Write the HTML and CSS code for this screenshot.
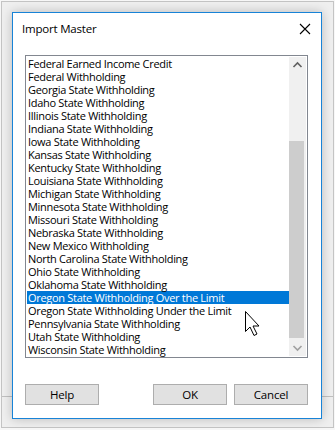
FILE: index.html
```html
<!DOCTYPE html>
<html>
<head>
	<title>Import Master</title>
	<meta charset=utf-8>
	<link rel="stylesheet" href="styles.css">
</head>
<body>
	<!-- the window behind the dialog -->
	<div class="backwin">
		<div class="dialog">
			<div class="titlebar">
				<span class="title">Import Master</span>
				<svg class="close" width="12" height="12" viewBox="0 0 12 12">
					<path d="M1 1 L11 11 M11 1 L1 11" stroke="#000" stroke-width="1.1" fill="none"/>
				</svg>
			</div>

			<div class="listbox">
				<ul class="items">
					<li>Federal Earned Income Credit</li>
					<li>Federal Withholding</li>
					<li>Georgia State Withholding</li>
					<li>Idaho State Withholding</li>
					<li>Illinois State Withholding</li>
					<li>Indiana State Withholding</li>
					<li>Iowa State Withholding</li>
					<li>Kansas State Withholding</li>
					<li>Kentucky State Withholding</li>
					<li>Louisiana State Withholding</li>
					<li>Michigan State Withholding</li>
					<li>Minnesota State Withholding</li>
					<li>Missouri State Withholding</li>
					<li>Nebraska State Withholding</li>
					<li>New Mexico Withholding</li>
					<li>North Carolina State Withholding</li>
					<li>Ohio State Withholding</li>
					<li>Oklahoma State Withholding</li>
					<li class="selected">Oregon State Withholding Over the Limit</li>
					<li>Oregon State Withholding Under the Limit</li>
					<li>Pennsylvania State Withholding</li>
					<li>Utah State Withholding</li>
					<li>Wisconsin State Withholding</li>
				</ul>
				<div class="scrollbar">
					<svg class="arrow" width="17" height="17" viewBox="0 0 17 17">
						<path d="M4.5 10 L8.5 6 L12.5 10" stroke="#606060" stroke-width="1.6" fill="none"/>
					</svg>
					<div class="track">
						<div class="thumb"></div>
					</div>
					<svg class="arrow" width="17" height="17" viewBox="0 0 17 17">
						<path d="M4.5 7 L8.5 11 L12.5 7" stroke="#a0a0a0" stroke-width="1.6" fill="none"/>
					</svg>
				</div>
			</div>

			<div class="buttons">
				<button class="btn">Help</button>
				<span class="spacer"></span>
				<button class="btn">OK</button>
				<button class="btn">Cancel</button>
			</div>
		</div>
	</div>

	<!-- mouse pointer over the list -->
	<svg class="pointer" width="18" height="28" viewBox="0 0 18 28">
		<path d="M1.5 1.5 V21.5 L6 17 L10 25.5 L13 24 L9 16 H15 Z" fill="#fff" stroke="#000" stroke-width="1" stroke-linejoin="miter"/>
	</svg>
</body>
</html>
```

FILE: styles.css
```css
body {
	margin: 0;
	width: 335px;
	height: 430px;
	background: #f7f7f7;
	font-family: "Open Sans", "Noto Sans", sans-serif;
	font-size: 11px;
	color: #000;
	overflow: hidden;
}
.backwin {
	position: relative;
	margin: 1px 1px 0 1px;
	height: 427px;
	border: 1px solid #c4c4c4;
	background: #efefef;
	padding: 10px 11px 0 10px;
	box-sizing: border-box;
}
/* form line of the window behind */
.backwin::before {
	content: "";
	position: absolute;
	left: 0;
	right: 0;
	top: 394px;
	border-top: 1px solid #c0c0c0;
}
.dialog {
	position: relative;
	width: 310px;
	height: 407px;
	box-sizing: border-box;
	border: 1px solid #1883d7;
	background: #fff;
	box-shadow: 0 0 10px rgba(0,0,0,.22);
	display: flex;
	flex-direction: column;
	padding: 0 13px 13px 12px;
}
.titlebar {
	display: flex;
	align-items: center;
	justify-content: space-between;
	height: 30px;
	margin: 0 -13px 0 -12px;
	padding: 0 10px 0 9px;
}
.title {
	font-size: 11.5px;
	letter-spacing: -0.2px;
	padding-top: 1px;
}
.close {
	margin-top: 1px;
}
.listbox {
	margin-top: 12px;
	height: 303px;
	box-sizing: border-box;
	border: 1px solid #828790;
	padding: 1px;
	display: flex;
}
.items {
	list-style: none;
	margin: 0;
	padding: 0;
	flex: 1;
}
.items li {
	height: 13px;
	line-height: 13px;
	padding-left: 1px;
	white-space: nowrap;
	font-size: 11px;
	letter-spacing: -0.3px;
}
.items li.selected {
	background: #0078d7;
	color: #fff;
}
.scrollbar {
	width: 17px;
	background: #f0f0f0;
	display: flex;
	flex-direction: column;
}
.arrow {
	display: block;
}
.track {
	flex: 1;
	padding-top: 67px;
	padding-bottom: 1px;
	display: flex;
}
.thumb {
	flex: 1;
	margin: 0 2px 0 0;
	background: #cdcdcd;
}
.buttons {
	margin-top: auto;
	display: flex;
	gap: 7px;
}
.spacer {
	flex: 1;
}
.btn {
	width: 74px;
	height: 21px;
	border: 1px solid #adadad;
	background: #e1e1e1;
	font-family: inherit;
	font-size: 11.5px;
	letter-spacing: -0.2px;
	padding: 0;
	color: #000;
}
.pointer {
	position: absolute;
	left: 244px;
	top: 310px;
}
```
